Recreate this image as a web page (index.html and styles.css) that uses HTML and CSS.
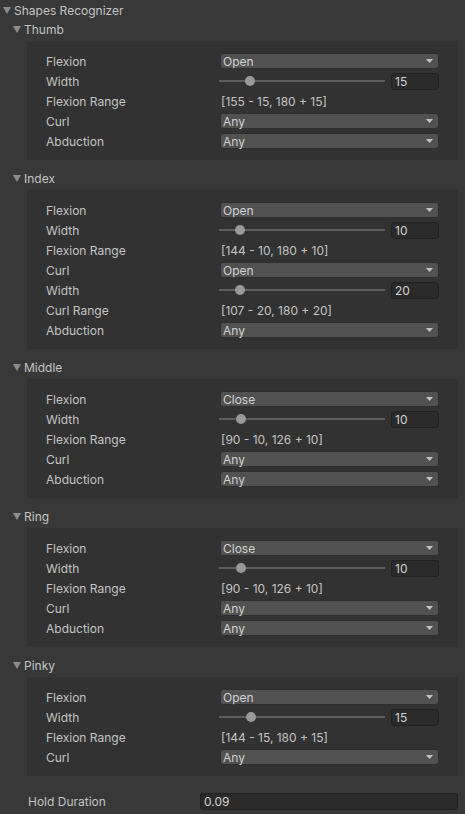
FILE: index.html
```html
<!DOCTYPE html>
<html>
<head>
<meta charset="utf-8">
<link rel="stylesheet" href="styles.css">
</head>
<body>
<div class="inspector">
  <div class="foldout root">
    <svg class="tri" width="8" height="7" viewBox="0 0 8 7"><polygon points="0,0 8,0 4,7"/></svg>
    <span>Shapes Recognizer</span>
  </div>

  <section class="finger">
    <div class="foldout">
      <svg class="tri" width="8" height="7" viewBox="0 0 8 7"><polygon points="0,0 8,0 4,7"/></svg>
      <span>Thumb</span>
    </div>
    <div class="box">
      <div class="row"><span class="label">Flexion</span><div class="dropdown"><span>Open</span><svg class="arrow" width="7" height="4" viewBox="0 0 7 4"><polygon points="0,0 7,0 3.5,4"/></svg></div></div>
      <div class="row"><span class="label">Width</span><div class="slider"><div class="track"><div class="knob" style="left:26px"></div></div><div class="num">15</div></div></div>
      <div class="row"><span class="label">Flexion Range</span><span class="value">[155 - 15, 180 + 15]</span></div>
      <div class="row"><span class="label">Curl</span><div class="dropdown"><span>Any</span><svg class="arrow" width="7" height="4" viewBox="0 0 7 4"><polygon points="0,0 7,0 3.5,4"/></svg></div></div>
      <div class="row"><span class="label">Abduction</span><div class="dropdown"><span>Any</span><svg class="arrow" width="7" height="4" viewBox="0 0 7 4"><polygon points="0,0 7,0 3.5,4"/></svg></div></div>
    </div>
  </section>

  <section class="finger">
    <div class="foldout">
      <svg class="tri" width="8" height="7" viewBox="0 0 8 7"><polygon points="0,0 8,0 4,7"/></svg>
      <span>Index</span>
    </div>
    <div class="box">
      <div class="row"><span class="label">Flexion</span><div class="dropdown"><span>Open</span><svg class="arrow" width="7" height="4" viewBox="0 0 7 4"><polygon points="0,0 7,0 3.5,4"/></svg></div></div>
      <div class="row"><span class="label">Width</span><div class="slider"><div class="track"><div class="knob" style="left:16px"></div></div><div class="num">10</div></div></div>
      <div class="row"><span class="label">Flexion Range</span><span class="value">[144 - 10, 180 + 10]</span></div>
      <div class="row"><span class="label">Curl</span><div class="dropdown"><span>Open</span><svg class="arrow" width="7" height="4" viewBox="0 0 7 4"><polygon points="0,0 7,0 3.5,4"/></svg></div></div>
      <div class="row"><span class="label">Width</span><div class="slider"><div class="track"><div class="knob" style="left:16px"></div></div><div class="num">20</div></div></div>
      <div class="row"><span class="label">Curl Range</span><span class="value">[107 - 20, 180 + 20]</span></div>
      <div class="row"><span class="label">Abduction</span><div class="dropdown"><span>Any</span><svg class="arrow" width="7" height="4" viewBox="0 0 7 4"><polygon points="0,0 7,0 3.5,4"/></svg></div></div>
    </div>
  </section>

  <section class="finger">
    <div class="foldout">
      <svg class="tri" width="8" height="7" viewBox="0 0 8 7"><polygon points="0,0 8,0 4,7"/></svg>
      <span>Middle</span>
    </div>
    <div class="box">
      <div class="row"><span class="label">Flexion</span><div class="dropdown"><span>Close</span><svg class="arrow" width="7" height="4" viewBox="0 0 7 4"><polygon points="0,0 7,0 3.5,4"/></svg></div></div>
      <div class="row"><span class="label">Width</span><div class="slider"><div class="track"><div class="knob" style="left:17px"></div></div><div class="num">10</div></div></div>
      <div class="row"><span class="label">Flexion Range</span><span class="value">[90 - 10, 126 + 10]</span></div>
      <div class="row"><span class="label">Curl</span><div class="dropdown"><span>Any</span><svg class="arrow" width="7" height="4" viewBox="0 0 7 4"><polygon points="0,0 7,0 3.5,4"/></svg></div></div>
      <div class="row"><span class="label">Abduction</span><div class="dropdown"><span>Any</span><svg class="arrow" width="7" height="4" viewBox="0 0 7 4"><polygon points="0,0 7,0 3.5,4"/></svg></div></div>
    </div>
  </section>

  <section class="finger">
    <div class="foldout">
      <svg class="tri" width="8" height="7" viewBox="0 0 8 7"><polygon points="0,0 8,0 4,7"/></svg>
      <span>Ring</span>
    </div>
    <div class="box">
      <div class="row"><span class="label">Flexion</span><div class="dropdown"><span>Close</span><svg class="arrow" width="7" height="4" viewBox="0 0 7 4"><polygon points="0,0 7,0 3.5,4"/></svg></div></div>
      <div class="row"><span class="label">Width</span><div class="slider"><div class="track"><div class="knob" style="left:17px"></div></div><div class="num">10</div></div></div>
      <div class="row"><span class="label">Flexion Range</span><span class="value">[90 - 10, 126 + 10]</span></div>
      <div class="row"><span class="label">Curl</span><div class="dropdown"><span>Any</span><svg class="arrow" width="7" height="4" viewBox="0 0 7 4"><polygon points="0,0 7,0 3.5,4"/></svg></div></div>
      <div class="row"><span class="label">Abduction</span><div class="dropdown"><span>Any</span><svg class="arrow" width="7" height="4" viewBox="0 0 7 4"><polygon points="0,0 7,0 3.5,4"/></svg></div></div>
    </div>
  </section>

  <section class="finger">
    <div class="foldout">
      <svg class="tri" width="8" height="7" viewBox="0 0 8 7"><polygon points="0,0 8,0 4,7"/></svg>
      <span>Pinky</span>
    </div>
    <div class="box">
      <div class="row"><span class="label">Flexion</span><div class="dropdown"><span>Open</span><svg class="arrow" width="7" height="4" viewBox="0 0 7 4"><polygon points="0,0 7,0 3.5,4"/></svg></div></div>
      <div class="row"><span class="label">Width</span><div class="slider"><div class="track"><div class="knob" style="left:27px"></div></div><div class="num">15</div></div></div>
      <div class="row"><span class="label">Flexion Range</span><span class="value">[144 - 15, 180 + 15]</span></div>
      <div class="row"><span class="label">Curl</span><div class="dropdown"><span>Any</span><svg class="arrow" width="7" height="4" viewBox="0 0 7 4"><polygon points="0,0 7,0 3.5,4"/></svg></div></div>
    </div>
  </section>

  <div class="hold">
    <span class="label">Hold Duration</span>
    <div class="num wide">0.09</div>
  </div>
</div>
</body>
</html>
```

FILE: styles.css
```css
html, body {
  margin: 0;
  padding: 0;
  background: #383838;
}
body {
  font-family: Inter, "Noto Sans", sans-serif;
  font-size: 12px;
  color: #c4c4c4;
  width: 465px;
  height: 814px;
  overflow: hidden;
}
.inspector {
  display: flex;
  flex-direction: column;
}
.foldout {
  display: flex;
  align-items: center;
  height: 18px;
  padding-left: 13px;
  gap: 3px;
}
.foldout.root {
  height: 20px;
  padding-left: 3px;
}
.tri {
  fill: #8c8c8c;
  display: block;
}
.finger {
  display: flex;
  flex-direction: column;
}
.box {
  margin: 3px 7px 9px 27px;
  padding: 10px 19px 9px 19px;
  background: #323232;
  display: flex;
  flex-direction: column;
}
.row {
  display: grid;
  grid-template-columns: 174px 1fr;
  align-items: center;
  height: 20px;
}
.dropdown {
  height: 16px;
  box-sizing: border-box;
  background: #515151;
  border: 1px solid #2f2f2f;
  border-radius: 3px;
  display: flex;
  align-items: center;
  justify-content: space-between;
  padding: 0 5px 0 2px;
  color: #d2d2d2;
}
.arrow {
  fill: #c4c4c4;
  display: block;
}
.value {
  padding-left: 1px;
}
.slider {
  display: flex;
  align-items: center;
  gap: 6px;
  margin-left: -1px;
}
.track {
  flex: 1;
  height: 2px;
  background: #5e5e5e;
  position: relative;
}
.knob {
  position: absolute;
  top: -4px;
  width: 10px;
  height: 10px;
  border-radius: 50%;
  background: #999999;
}
.num {
  width: 48px;
  height: 17px;
  box-sizing: border-box;
  background: #2a2a2a;
  border: 1px solid #212121;
  border-radius: 3px;
  padding-left: 3px;
  display: flex;
  align-items: center;
  color: #d2d2d2;
}
.hold {
  display: grid;
  grid-template-columns: 172px 1fr;
  align-items: center;
  height: 20px;
  margin-top: 6px;
  padding: 0 7px 0 28px;
}
.num.wide {
  width: auto;
}
```
